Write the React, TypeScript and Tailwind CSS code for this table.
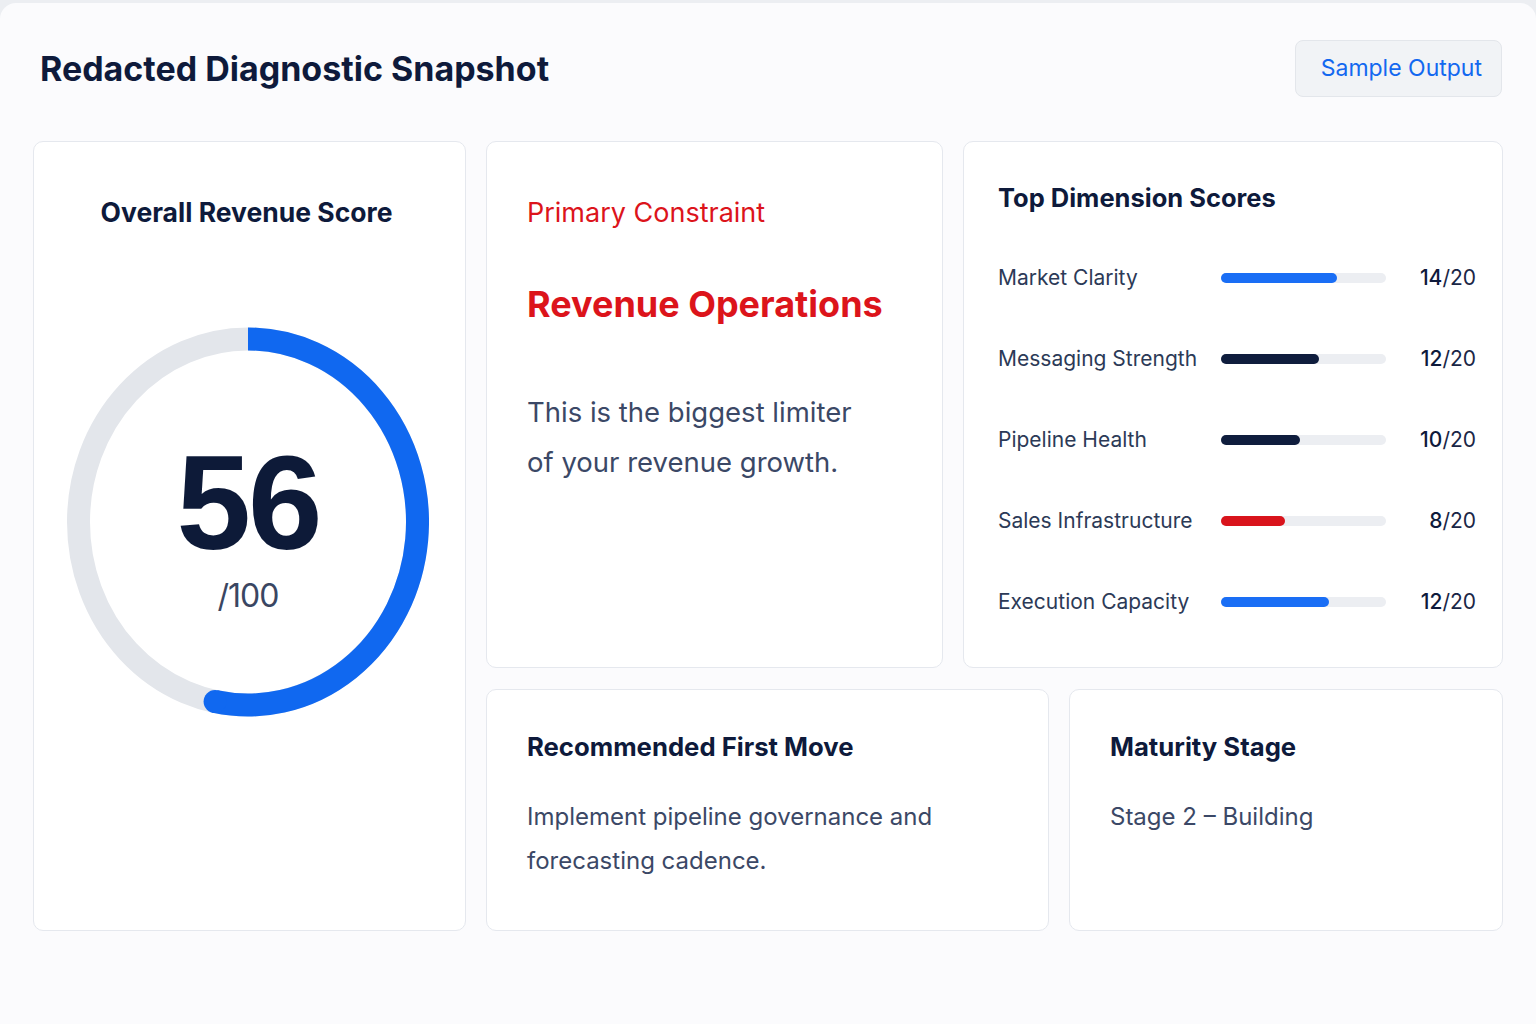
import React from "react";

const rows = [
  { label: "Market Clarity", score: 14, fill: 116, color: "bg-[#1a6ef5]" },
  { label: "Messaging Strength", score: 12, fill: 98, color: "bg-[#0f1d3d]" },
  { label: "Pipeline Health", score: 10, fill: 79, color: "bg-[#0f1d3d]" },
  { label: "Sales Infrastructure", score: 8, fill: 64, color: "bg-[#d9141c]" },
  { label: "Execution Capacity", score: 12, fill: 108, color: "bg-[#1a6ef5]" },
];

function Ring() {
  const cx = 181;
  const cy = 195;
  const rx = 169.5;
  const ry = 183;
  const t = (191.2 * Math.PI) / 180;
  const ex = cx + rx * Math.sin(t);
  const ey = cy - ry * Math.cos(t);
  return (
    <div className="relative w-[362px] h-[390px]">
      <svg width="362" height="390" viewBox="0 0 362 390" className="block">
        <ellipse cx={cx} cy={cy} rx={rx} ry={ry} fill="none" stroke="#e3e6eb" strokeWidth="23" />
        <path
          d={`M ${cx} ${cy - ry} A ${rx} ${ry} 0 1 1 ${ex} ${ey}`}
          fill="none"
          stroke="#1068f0"
          strokeWidth="23"
        />
        <circle cx={ex} cy={ey} r="11.5" fill="#1068f0" />
      </svg>
      <div className="absolute inset-0 flex flex-col items-center justify-center">
        <div
          className="text-[134px] leading-none font-bold text-[#0d1a38] tracking-[-3px] mt-[4px]"
          style={{ fontFamily: "'Liberation Sans', Arial, sans-serif" }}
        >
          56
        </div>
        <div className="text-[32px] leading-none text-[#3a4662] mt-[10px] tracking-[-1px]">/100</div>
      </div>
    </div>
  );
}

export default function App() {
  return (
    <div className="w-[1536px] h-[1024px] bg-[#eceef2] pt-[3px] overflow-hidden" style={{ fontFamily: "Inter, 'Noto Sans', sans-serif" }}>
      <div className="h-[1040px] bg-[#fbfbfd] rounded-t-[16px] px-[33px]">
        <div className="flex items-center justify-between pt-[37px] pl-[7px] pr-px">
          <h1 className="text-[34px] font-bold text-[#0e1a3b] leading-none">Redacted Diagnostic Snapshot</h1>
          <div className="h-[57px] pl-[25px] pr-[19px] flex items-center rounded-[8px] bg-[#f1f3f6] border border-[#e3e6eb] text-[23px] text-[#1368f0]">
            Sample Output
          </div>
        </div>

        <div className="grid grid-cols-[433px_457px_86px_434px] gap-x-[20px] gap-y-[21px] mt-[44px] grid-rows-[527px_242px]">
          {/* Card 1 */}
          <div className="row-span-2 rounded-[10px] border border-[#e5e8ee] bg-white flex flex-col items-center">
            <div className="mt-[57px] mr-[6px] text-[26.5px] font-bold text-[#0e1a3b] leading-none">Overall Revenue Score</div>
            <div className="mt-[101px] mr-[3px]">
              <Ring />
            </div>
          </div>

          {/* Card 2 */}
          <div className="rounded-[10px] border border-[#e5e8ee] bg-white pl-[40px] pt-[57px]">
            <div className="text-[27px] text-[#dc141b] leading-none">Primary Constraint</div>
            <div className="mt-[60px] text-[36px] font-bold text-[#dc141b] leading-none">Revenue Operations</div>
            <div className="mt-[65px] text-[27.5px] text-[#3b4866] leading-[50px]">
              This is the biggest limiter
              <br />
              of your revenue growth.
            </div>
          </div>

          {/* Card 3 */}
          <div className="col-span-2 rounded-[10px] border border-[#e5e8ee] bg-white pl-[34px] pr-[26px] pt-[43px]">
            <div className="text-[25.5px] font-bold text-[#0e1a3b] leading-none">Top Dimension Scores</div>
            <div className="mt-[27px] flex flex-col">
              {rows.map((r) => (
                <div key={r.label} className="h-[81px] flex items-center">
                  <div className="w-[223px] text-[21px] text-[#2c3a57]">{r.label}</div>
                  <div className="w-[165px] h-[10px] rounded-full bg-[#eceef2]">
                    <div className={`h-full rounded-full ${r.color}`} style={{ width: r.fill }} />
                  </div>
                  <div className="flex-1 text-right text-[21px] text-[#1a2646]">
                    <span className="font-medium text-[#0e1a3b]">{r.score}</span>/20
                  </div>
                </div>
              ))}
            </div>
          </div>

          {/* Card 4 */}
          <div className="col-span-2 rounded-[10px] border border-[#e5e8ee] bg-white pl-[40px] pt-[44px]">
            <div className="text-[25.7px] font-bold text-[#0e1a3b] leading-none">Recommended First Move</div>
            <div className="mt-[35px] text-[24px] text-[#3b4866] leading-[44px]">
              Implement pipeline governance and
              <br />
              forecasting cadence.
            </div>
          </div>

          {/* Card 5 */}
          <div className="rounded-[10px] border border-[#e5e8ee] bg-white pl-[40px] pt-[44px]">
            <div className="text-[25.7px] font-bold text-[#0e1a3b] leading-none">Maturity Stage</div>
            <div className="mt-[35px] text-[24px] text-[#3b4866] leading-[44px]">Stage 2 – Building</div>
          </div>
        </div>
      </div>
    </div>
  );
}
